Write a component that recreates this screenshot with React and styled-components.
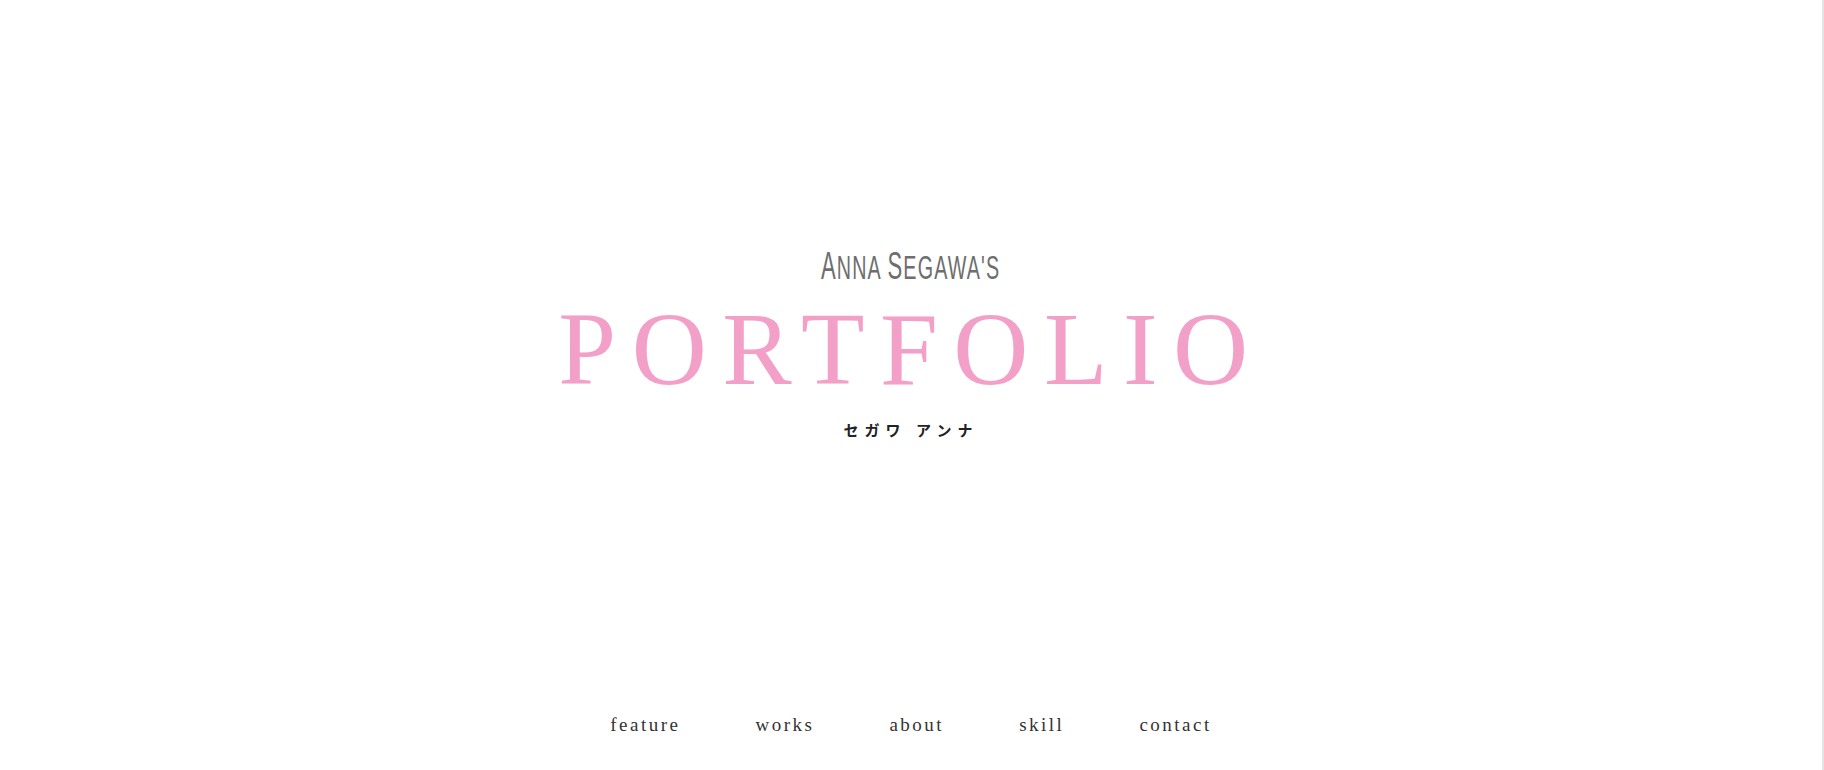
import React from "react";
import styled, { createGlobalStyle } from "styled-components";

const GlobalStyle = createGlobalStyle`
  html, body {
    margin: 0;
    padding: 0;
    background: #ffffff;
  }
  * {
    box-sizing: border-box;
  }
`;

const Page = styled.div`
  height: 100vh;
  display: flex;
  flex-direction: column;
  border-right: 2px solid #e4e4e4;
  background: #fff;
`;

const Hero = styled.header`
  flex: 1;
  display: flex;
  flex-direction: column;
  align-items: center;
  justify-content: center;
  padding-top: 6px;
`;

const Sub = styled.p`
  margin: 0;
  height: 40px;
  line-height: 40px;
  font-family: "Liberation Sans", Arial, sans-serif;
  font-size: 34px;
  letter-spacing: 2px;
  text-transform: uppercase;
  color: #6e6e6e;
  transform: scaleX(0.58);
  white-space: nowrap;
`;

const Cap = styled.span`
  font-size: 38px;
`;

const Title = styled.h1`
  margin: 11px 0 0;
  line-height: 104px;
  font-family: "Liberation Serif", "Times New Roman", serif;
  font-weight: 400;
  font-size: 104px;
  letter-spacing: 15.5px;
  color: #f3a0c8;
`;

const Kana = styled.p`
  margin: 19px 0 0;
  line-height: 20px;
  font-family: "Noto Sans CJK JP", sans-serif;
  font-weight: 700;
  font-size: 15px;
  letter-spacing: 6px;
  color: #222;
`;

const Nav = styled.nav`
  height: 90px;
  display: flex;
  justify-content: center;
  align-items: center;
  gap: 75px;
`;

const NavLink = styled.a`
  font-family: "Liberation Serif", "Times New Roman", serif;
  font-size: 19px;
  letter-spacing: 2.5px;
  color: #333;
  text-decoration: none;
  cursor: pointer;
`;

const links = ["feature", "works", "about", "skill", "contact"];

const App = () => {
  return (
    <Page>
      <GlobalStyle />
      <Hero>
        <Sub>
          <Cap>A</Cap>nna <Cap>S</Cap>egawa's
        </Sub>
        <Title>PORTFOLIO</Title>
        <Kana>セガワ アンナ</Kana>
      </Hero>
      <Nav>
        {links.map((link) => (
          <NavLink key={link} href={`#${link}`}>
            {link}
          </NavLink>
        ))}
      </Nav>
    </Page>
  );
};

export default App;
